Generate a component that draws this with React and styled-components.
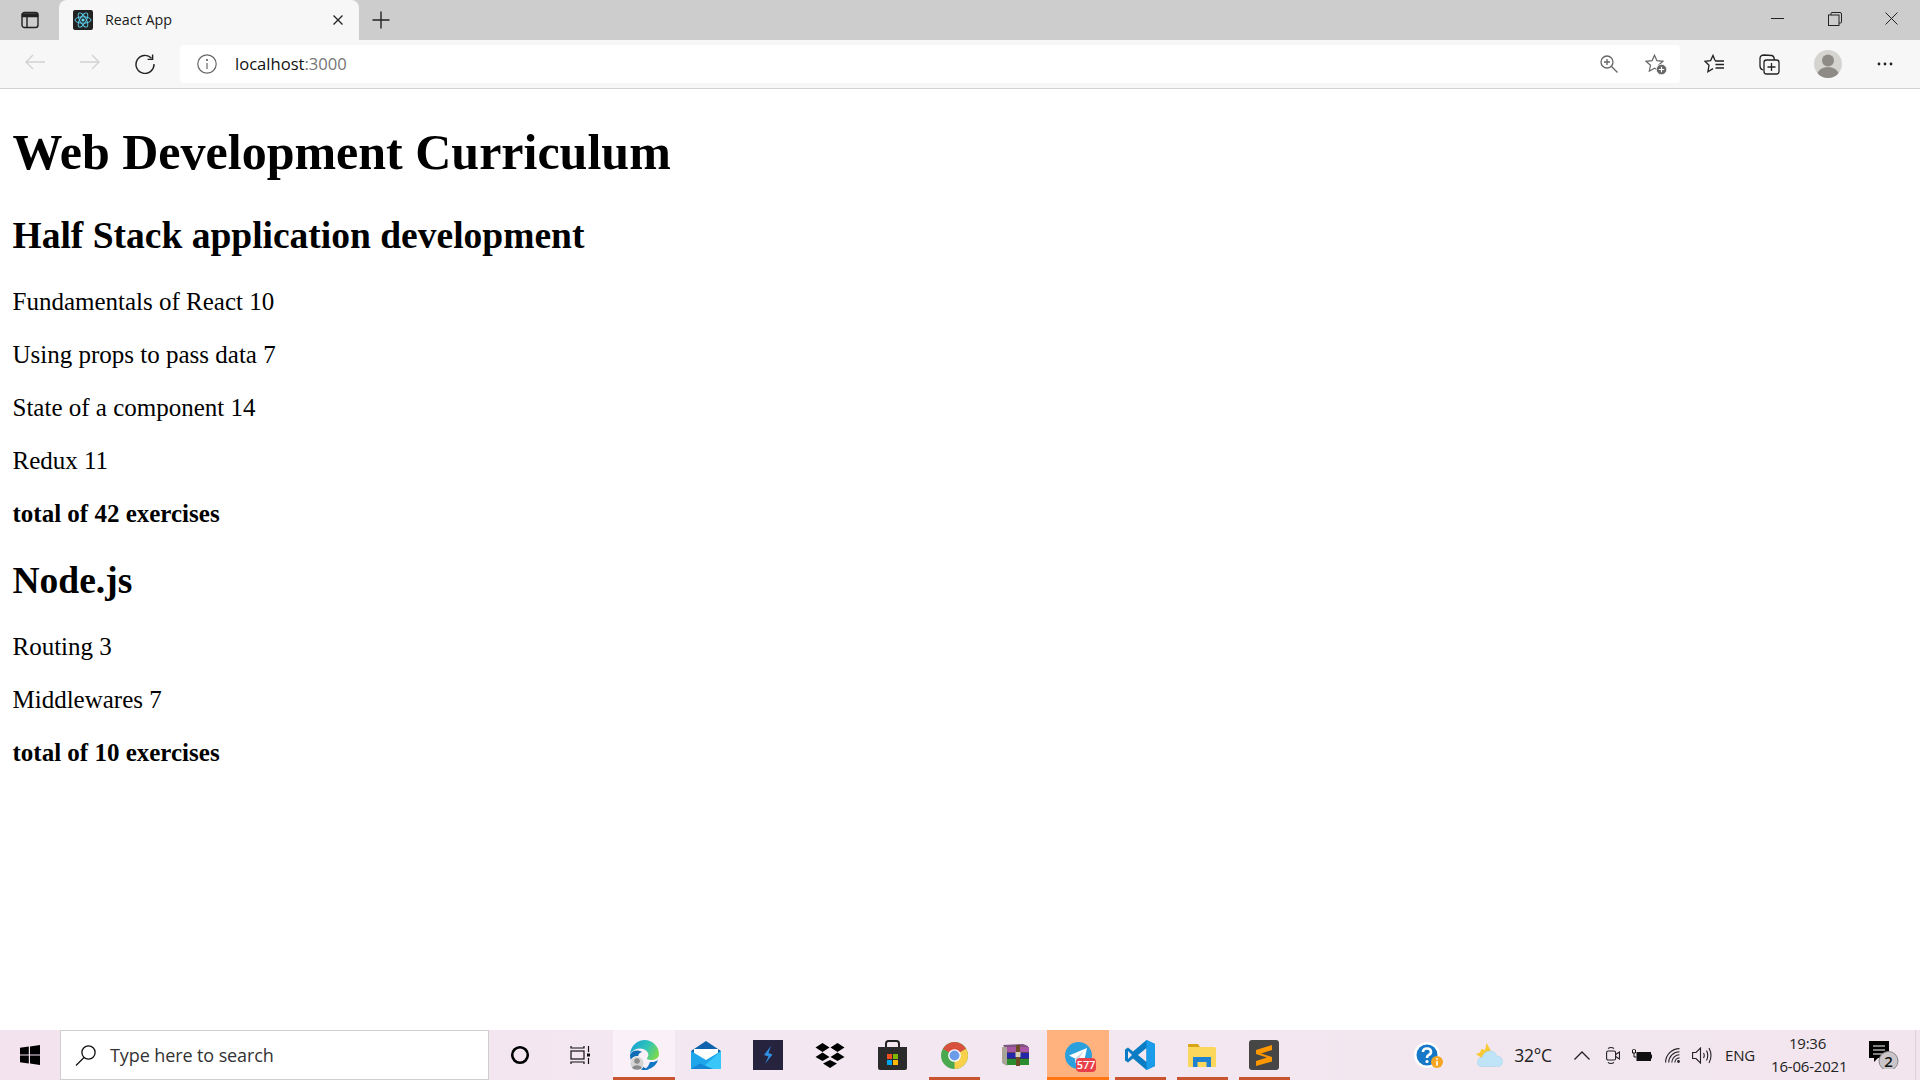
import styled, { createGlobalStyle } from 'styled-components';

const GlobalStyle = createGlobalStyle`
  html, body { margin: 0; padding: 0; height: 100%; overflow: hidden; background: #fff; }
`;

const uiFont = `"Open Sans", "Noto Sans", sans-serif`;

const Screen = styled.div`
  width: 1920px;
  height: 1080px;
  display: flex;
  flex-direction: column;
  overflow: hidden;
`;

/* ---------- browser chrome ---------- */

const TabStrip = styled.div`
  height: 40px;
  background: #cdcdcd;
  display: flex;
  align-items: stretch;
  flex-shrink: 0;
`;

const TabActions = styled.div`
  width: 59px;
  display: flex;
  align-items: center;
  padding-left: 21px;
  box-sizing: border-box;
`;

const Tab = styled.div`
  width: 300px;
  background: #f7f7f7;
  border-radius: 8px 8px 0 0;
  display: flex;
  align-items: center;
  padding: 0 16px 0 14px;
  box-sizing: border-box;
`;

const TabTitle = styled.span`
  font: 400 14.3px ${uiFont};
  color: #1a1a1a;
  margin-left: 12px;
  padding-bottom: 2px;
  flex: 1;
`;

const NewTab = styled.div`
  width: 44px;
  display: flex;
  align-items: center;
  justify-content: center;
`;

const WindowControls = styled.div`
  margin-left: auto;
  display: flex;
  align-items: center;
  padding-bottom: 3px;
`;

const WindowButton = styled.div`
  width: 57px;
  display: flex;
  justify-content: center;
`;

const Toolbar = styled.div`
  height: 48px;
  background: #f7f7f7;
  border-bottom: 1px solid #d2d2d2;
  display: flex;
  align-items: center;
  flex-shrink: 0;
`;

const NavButton = styled.div`
  width: 55px;
  display: flex;
  justify-content: center;
`;

const NavGroup = styled.div`
  width: 180px;
  padding-left: 7px;
  box-sizing: border-box;
  display: flex;
`;

const AddressBar = styled.div`
  width: 1500px;
  height: 38px;
  background: #fff;
  border-radius: 4px;
  display: flex;
  align-items: center;
  padding: 0 13px 0 17px;
  box-sizing: border-box;
`;

const Url = styled.span`
  font: 400 16.6px ${uiFont};
  color: #111;
  margin-left: 18px;
  padding-bottom: 2px;
  flex: 1;
`;

const Port = styled.span`
  color: #767676;
`;

const AddressIcons = styled.div`
  display: flex;
  align-items: center;
  gap: 27px;
`;

const ToolIcons = styled.div`
  display: flex;
  align-items: center;
  flex: 1;
  padding-left: 24px;
  gap: 34px;
`;

const Avatar = styled.div`
  width: 28px;
  height: 28px;
  border-radius: 50%;
  background: #d6d4d0;
  overflow: hidden;
  margin-right: 1px;
`;

/* ---------- page ---------- */

const Page = styled.main`
  flex: 1;
  padding: 2px 12.5px 0;
  background: #fff;
  color: #000;
  font-family: "Liberation Serif", "Times New Roman", serif;
  overflow: hidden;
`;

const Title = styled.h1`
  font-size: 50px;
  line-height: 57px;
  font-weight: 700;
  margin: 33px 0 34px;
`;

const CourseName = styled.h2`
  font-size: 37.5px;
  line-height: 42px;
  font-weight: 700;
  margin: 31.5px 0 31px;
`;

const Part = styled.p`
  font-size: 25px;
  line-height: 28px;
  margin: 25px 0;
`;

const Total = styled(Part)`
  font-weight: 700;
`;

/* ---------- taskbar ---------- */

const Taskbar = styled.footer`
  height: 50px;
  flex-shrink: 0;
  background: linear-gradient(90deg, #f3e3ee 0%, #f3e8f1 45%, #f2e7ef 75%, #f3e5ee 100%);
  display: flex;
  align-items: stretch;
`;

const StartButton = styled.div`
  width: 60px;
  display: flex;
  align-items: center;
  justify-content: center;
`;

const SearchBox = styled.div`
  width: 429px;
  background: #fff;
  border: 1px solid #cfcfcf;
  box-sizing: border-box;
  display: flex;
  align-items: center;
  padding-left: 14px;
`;

const SearchText = styled.span`
  font: 400 18px ${uiFont};
  letter-spacing: -0.1px;
  color: #333;
  margin-left: 14px;
`;

const Slot = styled.div`
  width: 62px;
  position: relative;
  display: flex;
  align-items: center;
  justify-content: center;
  background: ${p => (p.$state === 'flash' ? '#ffb27d' : p.$state === 'active' ? '#faf0f7' : 'transparent')};
  &::after {
    content: '';
    display: ${p => (p.$state ? 'block' : 'none')};
    position: absolute;
    bottom: 0;
    height: 3px;
    left: ${p => (p.$state === 'open' ? '6px' : '0')};
    right: ${p => (p.$state === 'open' ? '5px' : '0')};
    background: ${p => (p.$state === 'flash' ? '#ff7612' : '#c8552f')};
  }
`;

const Tray = styled.div`
  margin-left: auto;
  display: flex;
  align-items: center;
  width: 520px;
`;

const TrayItem = styled.div`
  display: flex;
  align-items: center;
  justify-content: center;
  flex-shrink: 0;
  width: ${p => p.$w}px;
  margin-left: ${p => p.$ml}px;
`;

const TrayText = styled.span`
  font: 400 ${p => p.$size}px ${uiFont};
  letter-spacing: -0.2px;
  color: #222;
  white-space: nowrap;
`;

const Clock = styled.div`
  width: 73px;
  margin-left: 17px;
  flex-shrink: 0;
  text-align: center;
  white-space: nowrap;
  font: 400 15px/23px ${uiFont};
  letter-spacing: -0.2px;
  color: #222;
`;

const NotificationEdge = styled.div`
  margin-left: 16px;
  width: 1px;
  height: 50px;
  background: #dcd2d9;
`;

const CountBadge = styled.span`
  position: absolute;
  left: 29px;
  top: 28px;
  width: 20px;
  height: 14px;
  border-radius: 4px;
  background: #e8404a;
  text-align: center;
  font: 600 11px/14px ${uiFont};
  letter-spacing: -0.2px;
  color: #fff;
`;

/* ---------- icons ---------- */

const Line = ({ w = 20, h = 20, color = '#222', sw = 1.3, children }) => (
  <svg width={w} height={h} viewBox={`0 0 ${w} ${h}`} fill="none" stroke={color} strokeWidth={sw}>
    {children}
  </svg>
);

const TabsIcon = () => (
  <Line w={18} h={18} sw={1.4}>
    <rect x="1" y="1.5" width="16" height="15" rx="2.5" />
    <path d="M1.5 3 h15 v2.5 h-15 z" fill="#222" />
    <path d="M6 5.5 v11" />
  </Line>
);

const ReactFavicon = () => (
  <svg width="20" height="20" viewBox="0 0 20 20">
    <rect width="20" height="20" rx="2" fill="#222" />
    <g fill="none" stroke="#61dafb" strokeWidth="0.9">
      <ellipse cx="10" cy="10" rx="8" ry="3.2" />
      <ellipse cx="10" cy="10" rx="8" ry="3.2" transform="rotate(60 10 10)" />
      <ellipse cx="10" cy="10" rx="8" ry="3.2" transform="rotate(120 10 10)" />
    </g>
    <circle cx="10" cy="10" r="1.6" fill="#61dafb" />
  </svg>
);

const CloseIcon = ({ size = 10, color = '#222', sw = 1.3 }) => (
  <Line w={size} h={size} color={color} sw={sw}>
    <path d={`M0.5 0.5 L${size - 0.5} ${size - 0.5} M${size - 0.5} 0.5 L0.5 ${size - 0.5}`} />
  </Line>
);

const PlusIcon = () => (
  <Line w={18} h={18} sw={1.4}>
    <path d="M9 0.5 V17.5 M0.5 9 H17.5" />
  </Line>
);

const MinimizeIcon = () => (
  <Line w={13} h={13} sw={1}>
    <path d="M0 6.5 H13" />
  </Line>
);

const RestoreIcon = () => (
  <Line w={14} h={14} sw={1}>
    <rect x="0.5" y="3" width="10.5" height="10.5" />
    <path d="M3 3 V1.5 Q3 0.5 4 0.5 H12 Q13.5 0.5 13.5 2 V10 Q13.5 11 12.5 11 H11" />
  </Line>
);

const ArrowIcon = ({ flip }) => (
  <Line w={20} h={16} color="#d2d2d2" sw={1.4}>
    <path d={flip ? 'M20 8 H1 M8 1 L1 8 L8 15' : 'M0 8 H19 M12 1 L19 8 L12 15'} />
  </Line>
);

const ReloadIcon = () => (
  <Line w={20} h={20} sw={1.4}>
    <path d="M16.5 4.2 A9 9 0 1 0 19 10" />
    <path d="M17.6 0.5 V5.4 H12.6" />
  </Line>
);

const InfoIcon = () => (
  <svg width="20" height="20" viewBox="0 0 20 20" fill="none" stroke="#666" strokeWidth="1.2">
    <circle cx="10" cy="10" r="9.2" />
    <path d="M10 9 V15" />
    <circle cx="10" cy="6" r="0.5" fill="#666" />
  </svg>
);

const ZoomIcon = () => (
  <Line w={18} h={18} color="#666" sw={1.3}>
    <circle cx="7" cy="7" r="6" />
    <path d="M11.3 11.3 L17.5 17.5 M7 4 V10 M4 7 H10" />
  </Line>
);

const StarAddIcon = () => (
  <svg width="22" height="21" viewBox="0 0 22 21" fill="none" stroke="#666" strokeWidth="1.2">
    <path d="M9.5 1.2 L11.9 6.6 L18 7.3 L13.5 11.3 L14.7 17.2 L9.5 14.3 L4.3 17.2 L5.5 11.3 L1 7.3 L7.1 6.6 Z" />
    <circle cx="16.5" cy="15.5" r="5.2" fill="#666" stroke="#fff" strokeWidth="0.8" />
    <path d="M16.5 12.8 V18.2 M13.8 15.5 H19.2" stroke="#fff" strokeWidth="1.2" />
  </svg>
);

const FavoritesIcon = () => (
  <Line w={21} h={20} sw={1.3}>
    <path d="M11 6.4 L9 1.4 L6.6 6.6 L1 7.3 L5 11.3 L3.9 17.8 L9 14.6 M11 7 H20 M11.5 10.5 H20 M11.5 14 H20" />
  </Line>
);

const CollectionsIcon = () => (
  <Line w={21} h={21} sw={1.3}>
    <path d="M13 1.5 L5 1 Q1.5 1 1 4 L1 12 Q1 15 4 16" />
    <rect x="5" y="6" width="15" height="14" rx="2.5" />
    <path d="M12.5 9 V17 M8.5 13 H16.5" />
    <path d="M13 1.5 Q15 2 15.5 6" />
  </Line>
);

const AvatarIcon = () => (
  <svg width="28" height="28" viewBox="0 0 28 28">
    <circle cx="14" cy="10.5" r="6" fill="#8e8b87" />
    <ellipse cx="14" cy="24.5" rx="10.5" ry="7.5" fill="#8e8b87" />
  </svg>
);

const DotsIcon = () => (
  <svg width="16" height="4" viewBox="0 0 16 4" fill="#222">
    <circle cx="2" cy="2" r="1.4" />
    <circle cx="8" cy="2" r="1.4" />
    <circle cx="14" cy="2" r="1.4" />
  </svg>
);

const WindowsLogo = () => (
  <svg width="20" height="20" viewBox="0 0 20 20" fill="#000">
    <path d="M0 2.8 L8.8 1.6 V9.4 H0 Z M10 1.4 L20 0 V9.4 H10 Z M0 10.6 H8.8 V18.4 L0 17.2 Z M10 10.6 H20 V20 L10 18.6 Z" />
  </svg>
);

const SearchGlass = () => (
  <Line w={21} h={21} color="#111" sw={1.3}>
    <circle cx="13.5" cy="7.5" r="6.6" />
    <path d="M9 12.5 L1 20.5" />
  </Line>
);

const CortanaIcon = () => (
  <svg width="20" height="20" viewBox="0 0 20 20" fill="none" stroke="#000" strokeWidth="2.6">
    <circle cx="10" cy="10" r="7.8" />
  </svg>
);

const TaskViewIcon = () => (
  <svg width="24" height="20" viewBox="0 0 24 20" fill="none" stroke="#111" strokeWidth="1.2">
    <path d="M1 1 V3 H14 V1 M1 19 V17 H14 V19" />
    <rect x="1" y="6" width="13" height="8" />
    <path d="M18.5 1 V7 M18.5 13 V19" />
    <rect x="17" y="8.5" width="3" height="3" fill="#111" stroke="none" />
  </svg>
);

const EdgeIcon = () => (
  <svg width="30" height="30" viewBox="0 0 30 30">
    <defs>
      <linearGradient id="edgeTop" x1="0" y1="0.2" x2="1" y2="0.6">
        <stop offset="0" stopColor="#1a9fd8" />
        <stop offset="0.55" stopColor="#2fc4b8" />
        <stop offset="1" stopColor="#7ad94f" />
      </linearGradient>
    </defs>
    <path d="M1 15 C3 10 9 9.5 13 12 C9 13 8 17 10 21 C12 26 17 29 20 30 L15 30 C7 30 1 23 1 15 Z" fill="#0f6cb5" />
    <path d="M1 14 C2 5 9 0 15.5 0 C24 0 30 7 30 14 C30 18 26 20 22 20 C19 20 17.5 19 18 18 C20 16 20 13 17 10.5 C13 7 5 8 1 14 Z" fill="url(#edgeTop)" />
    <path d="M21 22 C25 22.5 27.5 21 29 20 C27 26 22 29.5 15 30 C18 28 20 25 21 22 Z" fill="#1277c4" />
    <circle cx="8" cy="23.5" r="7" fill="#d4d4d4" stroke="#f4f4f4" strokeWidth="1" />
    <circle cx="8" cy="21" r="2.8" fill="#8a8a8a" />
    <path d="M3.2 28 C3.6 24.4 12.4 24.4 12.8 28 C10.5 30 5.5 30 3.2 28 Z" fill="#8a8a8a" />
  </svg>
);

const MailIcon = () => (
  <svg width="30" height="28" viewBox="0 0 30 28">
    <path d="M0 10 L15 0 L30 10 V14 H0 Z" fill="#0f63ad" />
    <path d="M3 8 L27 8 V13 L15 19 L3 13 Z" fill="#fff" />
    <path d="M0 10 L15 19 L30 10 V28 H0 Z" fill="#1fa6ea" />
    <path d="M30 10 V28 H10 Z" fill="#38c7f8" />
    <path d="M0 28 L9 22.5 L22 28 Z" fill="#1486d6" />
  </svg>
);

const SketchAppIcon = () => (
  <svg width="30" height="30" viewBox="0 0 30 30">
    <rect width="30" height="30" fill="#26233f" />
    <path d="M18 6 L11 15 L15.5 16.5 L12 24 L19.5 14.5 L15.5 13 Z" fill="#2f8fe0" />
  </svg>
);

const DropboxIcon = () => (
  <svg width="30" height="25" viewBox="0 0 30 25" fill="#000">
    <path d="M7.5 0 L14.5 4.5 L7.5 9 L0.5 4.5 Z M22.5 0 L29.5 4.5 L22.5 9 L15.5 4.5 Z M7.5 9.5 L14.5 14 L7.5 18 L0.5 14 Z M22.5 9.5 L29.5 14 L22.5 18 L15.5 14 Z M15 17 L22 20.5 L15 25 L8 20.5 Z" />
  </svg>
);

const StoreIcon = () => (
  <svg width="29" height="30" viewBox="0 0 29 30">
    <path d="M8 9 V3.5 Q8 1 10.5 1 H18.5 Q21 1 21 3.5 V9" fill="none" stroke="#222" strokeWidth="2" />
    <path d="M0 7 H29 V28 Q29 30 27 30 H2 Q0 30 0 28 Z" fill="#2b2b2b" />
    <rect x="9" y="14" width="5" height="5" fill="#f25022" />
    <rect x="15" y="14" width="5" height="5" fill="#7fba00" />
    <rect x="9" y="20" width="5" height="5" fill="#00a4ef" />
    <rect x="15" y="20" width="5" height="5" fill="#ffb900" />
  </svg>
);

const ChromeIcon = () => (
  <svg width="27" height="27" viewBox="0 0 28 28">
    <circle cx="14" cy="14" r="14" fill="#4aa84f" />
    <path d="M14 14 L2 7 A14 14 0 0 1 26.1 7 Z" fill="#d9503f" />
    <path d="M14 14 L26.1 7 A14 14 0 0 1 14 28 Z" fill="#f9d04b" />
    <circle cx="14" cy="14" r="6.6" fill="#fff" />
    <circle cx="14" cy="14" r="5.2" fill="#6c9be8" />
  </svg>
);

const WinRarIcon = () => (
  <svg width="28" height="22" viewBox="0 0 28 22">
    <path d="M1 1 L21 0 L26 2 V7 H5 Z" fill="#7d5580" />
    <rect x="5" y="3" width="22" height="6" fill="#a855a6" />
    <rect x="5" y="9" width="22" height="6" fill="#2327a8" />
    <rect x="5" y="15" width="22" height="6" fill="#2c8c30" />
    <path d="M0 3 L5 3 V22 L0 19 Z" fill="#a9a498" />
    <path d="M5 8.5 H27 M5 14.5 H27" stroke="#3a3a3a" strokeWidth="0.7" />
    <rect x="14" y="1" width="4" height="21" fill="#6d4a26" />
    <rect x="13.5" y="8" width="5" height="5" fill="#d8d0b8" />
  </svg>
);

const TelegramIcon = () => (
  <svg width="27" height="27" viewBox="0 0 27 27">
    <circle cx="13.5" cy="13.5" r="13.5" fill="#2c9fdd" />
    <path d="M4 13.5 L22 6 L18.5 22 L13 18 L10.5 21 L10 16.5 Z" fill="#fff" />
    <path d="M10 16.5 L19 9 L13 18 L10.5 21 Z" fill="#c8daea" />
  </svg>
);

const VscodeIcon = () => (
  <svg width="30" height="30" viewBox="0 0 30 30">
    <path d="M21.5 0 L30 4 V26 L21.5 30 L8 18.5 L3 22.5 L0 20.5 V9.5 L3 7.5 L8 11.5 Z M21.5 8 L13 15 L21.5 22 Z M3 11 V19 L7 15 Z" fill="#0a7cc4" fillRule="evenodd" />
    <path d="M21.5 0 L30 4 V26 L21.5 30 Z" fill="#1a9cea" />
  </svg>
);

const ExplorerIcon = () => (
  <svg width="28" height="23" viewBox="0 0 28 23">
    <path d="M0 1 Q0 0 1 0 H10 L12 3 H0 Z" fill="#d9a514" />
    <rect y="3" width="28" height="20" rx="1.5" fill="#fbd75c" />
    <path d="M5 23 V13 H23 V23 H18.5 V18 H9.5 V23 Z" fill="#1f82d0" />
  </svg>
);

const SublimeIcon = () => (
  <svg width="30" height="30" viewBox="0 0 30 30">
    <rect width="30" height="30" rx="3" fill="#464646" />
    <path d="M23 5 V10 L12 13.5 L23 17 V21.5 L7 26 V21 L18 17.5 L7 14 V10 Z" fill="#ff9800" />
  </svg>
);

const HelpIcon = () => (
  <svg width="29" height="26" viewBox="0 0 29 26">
    <circle cx="13" cy="13" r="13" fill="#fff" />
    <circle cx="13" cy="13" r="10.5" fill="#1778c7" />
    <path d="M9 10 Q9 6.5 13 6.5 Q17 6.5 17 10 Q17 12 14.5 13.2 Q13 14 13 16" fill="none" stroke="#fff" strokeWidth="2.6" />
    <circle cx="13" cy="19.5" r="1.6" fill="#fff" />
    <circle cx="23" cy="20" r="6" fill="#f6a623" />
    <rect x="22.2" y="19" width="1.6" height="4.6" fill="#fff" />
    <rect x="22.2" y="16.2" width="1.6" height="1.6" fill="#fff" />
  </svg>
);

const WeatherIcon = () => (
  <svg width="27" height="24" viewBox="0 0 27 24">
    <path d="M0 11 L4 9.5 L5.5 6 L9 7 L10.5 0 L14 6 L15 9 L7 16 Z" fill="#f9c933" />
    <path d="M5 23.5 Q1 23 1.5 18.5 Q2 14.5 6 14.5 Q8 8 14 8 Q19.5 8 20.5 13 Q26.5 13.5 26.5 18.5 Q26.5 23.5 21.5 23.5 Z" fill="#bfe3f7" stroke="#a8d3ee" strokeWidth="0.6" />
  </svg>
);

const ChevronIcon = () => (
  <Line w={16} h={9} sw={1.3}>
    <path d="M0.5 8.5 L8 1 L15.5 8.5" />
  </Line>
);

const VideoIcon = () => (
  <Line w={14} h={19} sw={1.1}>
    <rect x="0.6" y="5" width="9" height="9" rx="1.5" />
    <path d="M9.6 8.5 L13.5 6 V13 L9.6 10.5" />
    <path d="M2 2.5 Q5 0.5 8 2.5 M2 16.5 Q5 18.5 8 16.5" />
  </Line>
);

const BatteryIcon = () => (
  <svg width="20" height="13" viewBox="0 0 20 13" fill="#111">
    <rect x="4.5" y="3" width="14.5" height="9" />
    <rect x="19" y="5.5" width="1" height="4" />
    <path d="M0.5 1 V4 H3.5 V1 M2 4 V8 H4.5 M1.2 0 V1 M2.8 0 V1" stroke="#111" strokeWidth="1" fill="none" />
  </svg>
);

const WifiIcon = () => (
  <Line w={15} h={15} sw={1.1}>
    <path d="M0.6 14.5 A13.9 13.9 0 0 1 14.5 0.6 M3.7 14.5 A10.8 10.8 0 0 1 14.5 3.7 M6.8 14.5 A7.7 7.7 0 0 1 14.5 6.8 M9.9 14.5 A4.6 4.6 0 0 1 14.5 9.9" />
    <circle cx="13.5" cy="13.5" r="1.4" fill="#222" stroke="none" />
  </Line>
);

const VolumeIcon = () => (
  <Line w={20} h={17} sw={1.1}>
    <path d="M0.6 5.5 H4 L8.5 1 V16 L4 11.5 H0.6 Z" />
    <path d="M11.5 6 Q13 8.5 11.5 11 M14.5 3.5 Q17 8.5 14.5 13.5 M17 1 Q21 8.5 17 16" />
  </Line>
);

const NotificationIcon = () => (
  <svg width="30" height="28" viewBox="0 0 30 28">
    <path d="M0 0 H20 V17 H9 L5 21 V17 H0 Z" fill="#000" />
    <path d="M4 5 H16 M4 9 H16 M4 13 H16" stroke="#fff" strokeWidth="1.2" />
    <circle cx="19.5" cy="20" r="9.5" fill="#c9c5c8" stroke="#888" strokeWidth="1" />
    <text x="19.5" y="25.5" textAnchor="middle" fontFamily="Open Sans, sans-serif" fontSize="15" fontWeight="600" fill="#111">2</text>
  </svg>
);

/* ---------- data ---------- */

const courses = [
  {
    name: 'Half Stack application development',
    parts: [
      ['Fundamentals of React', 10],
      ['Using props to pass data', 7],
      ['State of a component', 14],
      ['Redux', 11],
    ],
  },
  {
    name: 'Node.js',
    parts: [
      ['Routing', 3],
      ['Middlewares', 7],
    ],
  },
];

const apps = [
  { key: 'edge', icon: <EdgeIcon />, state: 'active' },
  { key: 'mail', icon: <MailIcon /> },
  { key: 'sketch', icon: <SketchAppIcon /> },
  { key: 'dropbox', icon: <DropboxIcon /> },
  { key: 'store', icon: <StoreIcon /> },
  { key: 'chrome', icon: <ChromeIcon />, state: 'open' },
  { key: 'winrar', icon: <WinRarIcon /> },
  { key: 'telegram', icon: <TelegramIcon />, state: 'flash', badge: '577' },
  { key: 'vscode', icon: <VscodeIcon />, state: 'open' },
  { key: 'explorer', icon: <ExplorerIcon />, state: 'open' },
  { key: 'sublime', icon: <SublimeIcon />, state: 'open' },
];

const App = () => (
  <Screen>
    <GlobalStyle />
    <TabStrip>
      <TabActions><TabsIcon /></TabActions>
      <Tab>
        <ReactFavicon />
        <TabTitle>React App</TabTitle>
        <CloseIcon />
      </Tab>
      <NewTab><PlusIcon /></NewTab>
      <WindowControls>
        <WindowButton><MinimizeIcon /></WindowButton>
        <WindowButton><RestoreIcon /></WindowButton>
        <WindowButton><CloseIcon size={13} sw={1} /></WindowButton>
      </WindowControls>
    </TabStrip>

    <Toolbar>
      <NavGroup>
        <NavButton><ArrowIcon flip /></NavButton>
        <NavButton><ArrowIcon /></NavButton>
        <NavButton><ReloadIcon /></NavButton>
      </NavGroup>
      <AddressBar>
        <InfoIcon />
        <Url>localhost<Port>:3000</Port></Url>
        <AddressIcons>
          <ZoomIcon />
          <StarAddIcon />
        </AddressIcons>
      </AddressBar>
      <ToolIcons>
        <FavoritesIcon />
        <CollectionsIcon />
        <Avatar><AvatarIcon /></Avatar>
        <DotsIcon />
      </ToolIcons>
    </Toolbar>

    <Page>
      <Title>Web Development Curriculum</Title>
      {courses.map(course => (
        <section key={course.name}>
          <CourseName>{course.name}</CourseName>
          {course.parts.map(([name, exercises]) => (
            <Part key={name}>{name} {exercises}</Part>
          ))}
          <Total>total of {course.parts.reduce((sum, [, n]) => sum + n, 0)} exercises</Total>
        </section>
      ))}
    </Page>

    <Taskbar>
      <StartButton><WindowsLogo /></StartButton>
      <SearchBox>
        <SearchGlass />
        <SearchText>Type here to search</SearchText>
      </SearchBox>
      <Slot><CortanaIcon /></Slot>
      <Slot><TaskViewIcon /></Slot>
      {apps.map(app => (
        <Slot key={app.key} $state={app.state}>
          {app.icon}
          {app.badge && <CountBadge>{app.badge}</CountBadge>}
        </Slot>
      ))}
      <Tray>
        <TrayItem $w={29} $ml={14}><HelpIcon /></TrayItem>
        <TrayItem $w={27} $ml={33}><WeatherIcon /></TrayItem>
        <TrayItem $w={36} $ml={12}><TrayText $size={17.5}>32°C</TrayText></TrayItem>
        <TrayItem $w={16} $ml={23}><ChevronIcon /></TrayItem>
        <TrayItem $w={14} $ml={16}><VideoIcon /></TrayItem>
        <TrayItem $w={20} $ml={12}><BatteryIcon /></TrayItem>
        <TrayItem $w={15} $ml={13}><WifiIcon /></TrayItem>
        <TrayItem $w={20} $ml={12}><VolumeIcon /></TrayItem>
        <TrayItem $w={28} $ml={14}><TrayText $size={15}>ENG</TrayText></TrayItem>
        <Clock>19:36<br />16-06-2021</Clock>
        <TrayItem $w={30} $ml={25}><NotificationIcon /></TrayItem>
        <NotificationEdge />
      </Tray>
    </Taskbar>
  </Screen>
);

export default App;
